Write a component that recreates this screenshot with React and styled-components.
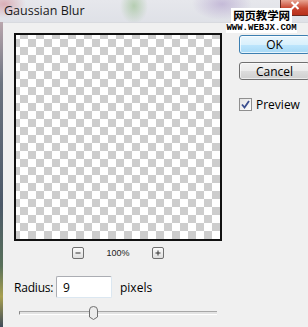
import styled, { createGlobalStyle } from 'styled-components';

const GlobalStyle = createGlobalStyle`
  html, body {
    margin: 0;
    padding: 0;
  }
  body {
    width: 308px;
    height: 327px;
    overflow: hidden;
    font-family: "Open Sans", "Noto Sans", sans-serif;
    color: #000;
  }
`;

const Window = styled.div`
  position: relative;
  width: 308px;
  height: 327px;
  overflow: hidden;
  display: flex;
  flex-direction: column;
  background: #f0f0f0;
`;

const TitleBar = styled.div`
  height: 22px;
  flex: none;
  display: flex;
  align-items: flex-start;
  background:
    radial-gradient(ellipse 22px 14px at 4px 4px, rgba(214, 150, 160, 0.7), transparent),
    radial-gradient(ellipse 14px 18px at 134px 6px, rgba(150, 190, 140, 0.6), transparent),
    radial-gradient(ellipse 30px 16px at 222px 4px, rgba(170, 150, 200, 0.55), transparent),
    linear-gradient(#e6e7ec, #dfe1e7);
`;

const Title = styled.span`
  margin: 2px 0 0 4px;
  font-size: 12.5px;
  color: #1a1a1a;
`;

const CloseButton = styled.div`
  margin-left: auto;
  width: 28px;
  height: 16px;
  border-radius: 0 0 0 4px;
  background: linear-gradient(#e8a493, #c8452f 55%, #b8301b);
  border: 1px solid #6b2a20;
  border-top: none;
  border-right: none;
  display: flex;
  justify-content: center;
  padding-top: 1px;
  box-sizing: border-box;
`;

const Body = styled.div`
  flex: 1;
  display: flex;
`;

const Frame = styled.div`
  width: 3px;
  flex: none;
  background: linear-gradient(#b9a6ad, #6c7480 20%, #4b5868 60%, #58705a 80%, #a8a050 90%, #3f4b5a);
`;

const Content = styled.div`
  flex: 1;
  display: flex;
  border-top: 1px solid #d8dadf;
`;

const LeftPane = styled.div`
  display: flex;
  flex-direction: column;
  padding: 10px 0 0 11px;
`;

const Preview = styled.div`
  width: 208px;
  height: 208px;
  box-sizing: border-box;
  border: 2px solid #111;
  background-color: #fff;
  background-image: conic-gradient(#cdcdcd 25%, #fff 0 50%, #cdcdcd 0 75%, #fff 0);
  background-size: 16px 16px;
  background-position: -4px -4px;
`;

const ZoomRow = styled.div`
  width: 208px;
  margin-top: 6px;
  height: 12px;
  display: flex;
  justify-content: center;
  align-items: center;
  gap: 22px;
`;

const ZoomButton = styled.div`
  width: 12px;
  height: 12px;
  box-sizing: border-box;
  border: 1px solid #707070;
  border-radius: 2px;
  background: linear-gradient(#fbfbfb, #dedede);
  display: flex;
  align-items: center;
  justify-content: center;
`;

const ZoomLabel = styled.span`
  font-family: "Liberation Sans", Arial, sans-serif;
  font-size: 9px;
  color: #222;
`;

const RadiusRow = styled.div`
  margin-top: 17px;
  height: 22px;
  display: flex;
  align-items: center;
  font-size: 12px;
`;

const FieldLabel = styled.span`
  width: 42px;
  letter-spacing: -0.2px;
`;

const TextBox = styled.div`
  width: 56px;
  height: 22px;
  box-sizing: border-box;
  border: 1px solid #abadb3;
  border-bottom-color: #dbe7f1;
  border-right-color: #dbe7f1;
  border-radius: 2px;
  background: #fff;
  padding-left: 6px;
  display: flex;
  align-items: center;
`;

const Unit = styled.span`
  margin-left: 8px;
`;

const Slider = styled.div`
  position: relative;
  margin: 8px 0 0 5px;
  width: 198px;
  height: 14px;
  display: flex;
  align-items: center;
`;

const Track = styled.div`
  flex: 1;
  height: 2px;
  border-top: 1px solid #a7a7a7;
  border-bottom: 1px solid #fff;
  background: #e3e3e3;
  border-left: 1px solid #888;
`;

const Thumb = styled.svg`
  position: absolute;
  top: 0;
  left: ${p => p.$left}px;
`;

const RightPane = styled.div`
  display: flex;
  flex-direction: column;
  padding: 12px 0 0 17px;
`;

const Button = styled.div`
  width: 71px;
  height: ${p => (p.$primary ? 19 : 18)}px;
  margin-top: ${p => p.$gap}px;
  box-sizing: border-box;
  border: 1px solid ${p => (p.$primary ? '#3c7fb1' : '#707070')};
  border-radius: 3px;
  background: ${p =>
    p.$primary
      ? 'linear-gradient(#eaf6fd, #d9f0fc 50%, #bee6fd 50%, #a7d9f5)'
      : 'linear-gradient(#f2f2f2, #ebebeb 50%, #dddddd 50%, #cfcfcf)'};
  box-shadow: inset 0 0 0 1px ${p => (p.$primary ? 'rgba(255,255,255,0.7)' : 'rgba(255,255,255,0.6)')};
  display: flex;
  align-items: center;
  justify-content: center;
  font-size: 12px;
`;

const CheckRow = styled.label`
  margin-top: 16px;
  display: flex;
  align-items: center;
  font-size: 12px;
`;

const CheckBox = styled.div`
  width: 13px;
  height: 13px;
  box-sizing: border-box;
  border: 1px solid #8f8f8f;
  background: linear-gradient(135deg, #e4e4e4, #fdfdfd);
  display: flex;
  align-items: center;
  justify-content: center;
  margin-right: 4px;
`;

const Watermark = styled.div`
  position: absolute;
  top: 8px;
  left: 226px;
  width: 71px;
  display: flex;
  flex-direction: column;
  align-items: center;
`;

const WatermarkCn = styled.div`
  background: #fff;
  padding: 0 2px;
  height: 15px;
  line-height: 15px;
  font-family: "Noto Sans CJK SC", sans-serif;
  font-size: 11.5px;
  font-weight: 700;
  letter-spacing: -0.2px;
`;

const WatermarkUrl = styled.div`
  background: #fff;
  width: 71px;
  height: 10px;
  line-height: 10px;
  text-align: center;
  font-family: "Liberation Mono", monospace;
  font-size: 9px;
  font-weight: 700;
`;

const App = () => {
  return (
    <Window>
      <GlobalStyle />
      <TitleBar>
        <Title>Gaussian Blur</Title>
        <CloseButton>
          <svg width="10" height="9" viewBox="0 0 10 9">
            <path d="M1.5 1 L8.5 8 M8.5 1 L1.5 8" stroke="#fff" strokeWidth="2" />
          </svg>
        </CloseButton>
      </TitleBar>
      <Body>
        <Frame />
        <Content>
          <LeftPane>
            <Preview />
            <ZoomRow>
              <ZoomButton>
                <svg width="6" height="6" viewBox="0 0 6 6">
                  <path d="M0.5 3 H5.5" stroke="#333" strokeWidth="1" />
                </svg>
              </ZoomButton>
              <ZoomLabel>100%</ZoomLabel>
              <ZoomButton>
                <svg width="6" height="6" viewBox="0 0 6 6">
                  <path d="M0.5 3 H5.5 M3 0.5 V5.5" stroke="#333" strokeWidth="1" />
                </svg>
              </ZoomButton>
            </ZoomRow>
            <RadiusRow>
              <FieldLabel>Radius:</FieldLabel>
              <TextBox>9</TextBox>
              <Unit>pixels</Unit>
            </RadiusRow>
            <Slider>
              <Track />
              <Thumb $left={69} width="11" height="14" viewBox="0 0 11 14">
                <path
                  d="M1.5 4 Q1.5 0.5 5.5 0.5 Q9.5 0.5 9.5 4 V11 L5.5 13.5 L1.5 11 Z"
                  fill="#ececec"
                  stroke="#707070"
                />
              </Thumb>
            </Slider>
          </LeftPane>
          <RightPane>
            <Button $primary $gap={0}>OK</Button>
            <Button $gap={8}>Cancel</Button>
            <CheckRow>
              <CheckBox>
                <svg width="9" height="9" viewBox="0 0 9 9">
                  <path d="M1 4.5 L3.5 7.5 L8 1" fill="none" stroke="#3b4f8f" strokeWidth="1.8" />
                </svg>
              </CheckBox>
              Preview
            </CheckRow>
          </RightPane>
        </Content>
      </Body>
      <Watermark>
        <WatermarkCn>网页教学网</WatermarkCn>
        <WatermarkUrl>WWW.WEBJX.COM</WatermarkUrl>
      </Watermark>
    </Window>
  );
};

export default App;
